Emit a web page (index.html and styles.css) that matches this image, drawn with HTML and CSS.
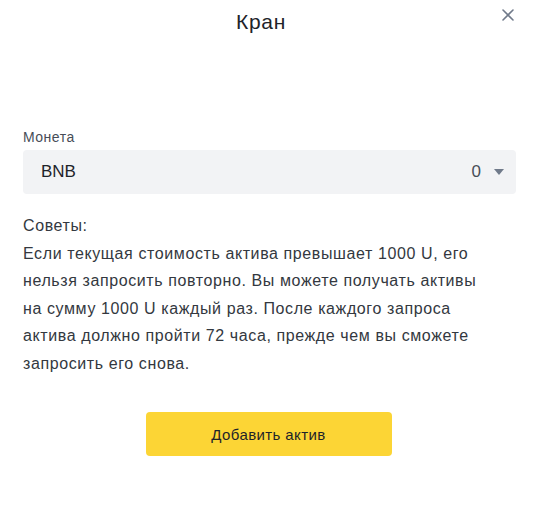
FILE: index.html
```html
<!DOCTYPE html>
<html lang="ru">
<head>
<meta charset="utf-8">
<link rel="stylesheet" href="styles.css">
</head>
<body>
<div class="modal">
  <div class="header">
    <h1 class="title">Кран</h1>
    <button class="close" aria-label="Закрыть">
      <svg width="12" height="12" viewBox="0 0 12 12"><path d="M1 1L11 11M11 1L1 11" stroke="#707A8A" stroke-width="1.6" stroke-linecap="round"/></svg>
    </button>
  </div>
  <div class="field">
    <div class="label">Монета</div>
    <div class="select">
      <span class="coin">BNB</span>
      <span class="right"><span class="amount">0</span><span class="caret"></span></span>
    </div>
  </div>
  <div class="tips">
    <p>Советы:</p>
    <p>Если текущая стоимость актива превышает 1000 U, его нельзя запросить повторно. Вы можете получать активы на сумму 1000 U каждый раз. После каждого запроса актива должно пройти 72 часа, прежде чем вы сможете запросить его снова.</p>
  </div>
  <div class="actions">
    <button class="btn">Добавить актив</button>
  </div>
</div>
</body>
</html>
```
FILE: styles.css
```css
html, body {
  margin: 0;
  background: #fff;
}
body {
  font-family: "Liberation Sans", Arial, sans-serif;
  color: #1E2329;
}
.modal {
  width: 541px;
  height: 515px;
  box-sizing: border-box;
  padding: 0 25px 0 23px;
}
.header {
  position: relative;
  height: 44px;
  display: flex;
  align-items: center;
  justify-content: center;
}
.title {
  margin: 0;
  font-size: 21px;
  font-weight: 400;
  line-height: 28px;
  letter-spacing: 0.7px;
  padding-right: 17px;
}
.close {
  position: absolute;
  right: 2px;
  top: 9px;
  width: 12px;
  height: 12px;
  padding: 0;
  border: 0;
  background: none;
  display: flex;
}
.field {
  margin-top: 83px;
}
.label {
  font-size: 14px;
  line-height: 20px;
  letter-spacing: 0.5px;
  color: #474D57;
}
.select {
  margin-top: 3px;
  height: 44px;
  background: #F2F3F5;
  border-radius: 4px;
  display: flex;
  align-items: center;
  justify-content: space-between;
  padding: 0 12px 0 18px;
  font-size: 17px;
  color: #1E2329;
}
.right {
  display: flex;
  align-items: center;
  gap: 13px;
}
.amount {
  color: #474D57;
}
.caret {
  width: 0;
  height: 0;
  border-left: 5px solid transparent;
  border-right: 5px solid transparent;
  border-top: 6px solid #707A8A;
}
.tips {
  margin-top: 18px;
  padding-right: 20px;
  font-size: 16px;
  line-height: 27.5px;
  letter-spacing: 0.6px;
  color: #333840;
}
.tips p {
  margin: 0;
}
.actions {
  margin-top: 35px;
  display: flex;
  justify-content: center;
  padding-right: 2px;
}
.btn {
  width: 246px;
  height: 44px;
  border: 0;
  border-radius: 4px;
  background: #FCD535;
  font-family: "Liberation Sans", Arial, sans-serif;
  font-size: 15px;
  letter-spacing: 0.4px;
  color: #1E2329;
}
```
